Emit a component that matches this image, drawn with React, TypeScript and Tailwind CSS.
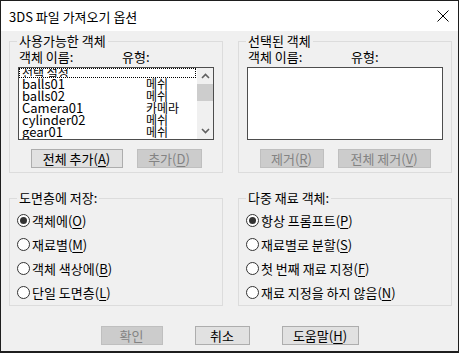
import React from "react";

const U = ({ c }: { c: string }) => (
  <span className="underline underline-offset-[2px] decoration-[1px]">{c}</span>
);

function Btn({
  w,
  pre,
  k,
  disabled,
}: {
  w: string;
  pre: string;
  k?: string;
  disabled?: boolean;
}) {
  return (
    <div
      className={`${w} h-[19px] flex items-center justify-center border text-[13px] leading-[15px] ${
        disabled
          ? "bg-[#cccccc] border-[#bfbfbf] text-[#838383]"
          : "bg-[#e1e1e1] border-[#adadad] text-black"
      }`}
    >
      {k ? (
        <span>
          {pre}(<U c={k} />)
        </span>
      ) : (
        <span>{pre}</span>
      )}
    </div>
  );
}

function Radio({ checked, pre, k }: { checked?: boolean; pre: string; k: string }) {
  return (
    <div className="flex items-center h-[24px] gap-[2px]">
      <span className="w-[13px] h-[13px] rounded-full border border-[#333333] bg-white flex items-center justify-center shrink-0">
        {checked && <span className="w-[7px] h-[7px] rounded-full bg-[#333333]" />}
      </span>
      <span className="text-[13px] leading-[15px]">
        {pre}(<U c={k} />)
      </span>
    </div>
  );
}

function Group({
  title,
  children,
  className = "",
}: {
  title: string;
  children: React.ReactNode;
  className?: string;
}) {
  return (
    <fieldset className={`border border-[#dcdcdc] ${className}`}>
      <legend className="ml-[7px] px-[2px] text-[13px] leading-[14px]">{title}</legend>
      {children}
    </fieldset>
  );
}

const items: [string, string][] = [
  ["balls01", "메쉬"],
  ["balls02", "메쉬"],
  ["Camera01", "카메라"],
  ["cylinder02", "메쉬"],
  ["gear01", "메쉬"],
];

function Chevron({ up }: { up?: boolean }) {
  return (
    <svg width="9" height="6" viewBox="0 0 9 6">
      <path
        d={up ? "M1 5 L4.5 1.5 L8 5" : "M1 1 L4.5 4.5 L8 1"}
        fill="none"
        stroke="#606060"
        strokeWidth="1.6"
      />
    </svg>
  );
}

export default function App() {
  return (
    <div className="w-[459px] h-[353px] border border-b-2 border-[#1e1e1e] bg-[#f0f0f0] flex flex-col font-['Noto_Sans_CJK_KR','Noto_Sans',sans-serif] text-black overflow-hidden">
      {/* title bar */}
      <div className="h-[30px] bg-white flex items-center pl-[8px] shrink-0">
        <span className="text-[13px] leading-[15px]">3DS 파일 가져오기 옵션</span>
        <svg className="ml-auto mr-[9px]" width="12" height="12" viewBox="0 0 12 12">
          <path d="M0.5 0.5 L11.5 11.5 M11.5 0.5 L0.5 11.5" stroke="#000" strokeWidth="1" />
        </svg>
      </div>

      {/* body */}
      <div className="flex flex-col pl-[8px] pr-[6px] pt-[3px]">
        <div className="grid grid-cols-[214px_214px] gap-x-[15px]">
          {/* available objects */}
          <Group title="사용가능한 객체">
            <div className="px-[8px] pb-[4px]">
              <div className="mt-[2px] flex text-[13px] leading-[14px]">
                <span className="pl-[1px] w-[104px]">객체 이름:</span>
                <span>유형:</span>
              </div>
              <div className="mt-[3px] h-[73px] border border-[#4d4d4d] bg-white flex overflow-hidden">
                <div className="flex-1 flex flex-col overflow-hidden text-[13px] leading-[12px]">
                  <div className="h-[10px] mr-[1px] border border-dotted border-black overflow-hidden shrink-0">
                    <div className="-mt-[2px] pl-[2px] text-[12px] leading-[12px] whitespace-nowrap">
                      선택 설정
                    </div>
                  </div>
                  {items.map(([n, t]) => (
                    <div key={n} className="h-[12px] flex shrink-0 whitespace-nowrap">
                      <span className="pl-[3px] w-[127px]">{n}</span>
                      <span className="text-[12px]">{t}</span>
                    </div>
                  ))}
                </div>
                <div className="w-[16px] bg-[#f0f0f0] flex flex-col">
                  <div className="h-[16px] flex items-center justify-center">
                    <Chevron up />
                  </div>
                  <div className="h-[17px] bg-[#cdcdcd]" />
                  <div className="flex-1" />
                  <div className="h-[16px] flex items-center justify-center">
                    <Chevron />
                  </div>
                </div>
              </div>
              <div className="mt-[9px] flex justify-center gap-[14px]">
                <Btn w="w-[92px]" pre="전체 추가" k="A" />
                <Btn w="w-[65px]" pre="추가" k="D" disabled />
              </div>
            </div>
          </Group>

          {/* selected objects */}
          <Group title="선택된 객체">
            <div className="px-[8px] pb-[4px]">
              <div className="mt-[2px] flex text-[13px] leading-[14px]">
                <span className="pl-[1px] w-[104px]">객체 이름:</span>
                <span>유형:</span>
              </div>
              <div className="mt-[3px] h-[73px] border border-[#4d4d4d] bg-white" />
              <div className="mt-[9px] flex justify-center gap-[14px]">
                <Btn w="w-[64px]" pre="제거" k="R" disabled />
                <Btn w="w-[93px]" pre="전체 제거" k="V" disabled />
              </div>
            </div>
          </Group>
        </div>

        <div className="mt-[18px] grid grid-cols-[214px_214px] gap-x-[15px]">
          <Group title="도면층에 저장:">
            <div className="pl-[7px] pt-[3px] pb-[1px]">
              <Radio checked pre="객체에" k="O" />
              <Radio pre="재료별" k="M" />
              <Radio pre="객체 색상에" k="B" />
              <Radio pre="단일 도면층" k="L" />
            </div>
          </Group>
          <Group title="다중 재료 객체:">
            <div className="pl-[7px] pt-[3px] pb-[1px]">
              <Radio checked pre="항상 프롬프트" k="P" />
              <Radio pre="재료별로 분할" k="S" />
              <Radio pre="첫 번째 재료 지정" k="F" />
              <Radio pre="재료 지정을 하지 않음" k="N" />
            </div>
          </Group>
        </div>
      </div>

      <div className="mt-[20px] flex justify-center gap-[32px]">
        <Btn w="w-[62px]" pre="확인" disabled />
        <Btn w="w-[55px]" pre="취소" />
        <Btn w="w-[77px]" pre="도움말" k="H" />
      </div>
    </div>
  );
}
